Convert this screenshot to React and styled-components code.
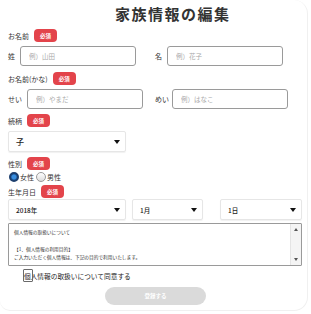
import React from "react";
import styled, { createGlobalStyle } from "styled-components";

const Global = createGlobalStyle`
  html, body {
    margin: 0;
    padding: 0;
    background: #ffffff;
  }
  body {
    font-family: "Noto Sans CJK JP", "Noto Sans", sans-serif;
    color: #333333;
  }
`;

const Card = styled.div`
  box-sizing: border-box;
  width: 308px;
  height: 311px;
  background: #ffffff;
  border: 1px solid #f0f0f0;
  border-top: none;
  border-left: none;
  border-radius: 0 14px 14px 10px;
  padding: 0 0 0 8px;
  display: flex;
  flex-direction: column;
`;

const Title = styled.h1`
  margin: 5px 0 0;
  padding-left: 107px;
  height: 20px;
  font-size: 15px;
  line-height: 18px;
  font-weight: 700;
  letter-spacing: 1.5px;
  color: #333333;
`;

const LabelRow = styled.div`
  display: flex;
  align-items: center;
  height: 13px;
  margin-top: ${(p) => p.$top || 0}px;
  font-size: 7px;
  color: #333333;
`;

const Badge = styled.span`
  display: inline-flex;
  align-items: center;
  justify-content: center;
  width: 23px;
  height: 13px;
  margin-left: 5px;
  border-radius: 4px;
  background: #e3444b;
  color: #ffffff;
  font-size: 5.5px;
  font-weight: 700;
`;

const FieldRow = styled.div`
  display: grid;
  grid-template-columns: 147px auto;
  margin-top: ${(p) => p.$top || 0}px;
`;

const Field = styled.label`
  display: flex;
  align-items: center;
  font-size: 7px;
  color: #333333;
`;

const FieldName = styled.span`
  margin-right: ${(p) => p.$gap || 5}px;
`;

const TextInput = styled.input`
  box-sizing: border-box;
  width: 116px;
  height: 20px;
  border: 1px solid #9a9a9a;
  border-radius: 3px;
  padding: 0 0 0 8px;
  font-family: inherit;
  font-size: 6.5px;
  outline: none;
  &::placeholder {
    color: #a8a8a8;
  }
`;

const Select = styled.div`
  box-sizing: border-box;
  display: flex;
  align-items: center;
  justify-content: space-between;
  width: ${(p) => p.$w}px;
  height: 21px;
  margin-left: ${(p) => p.$ml || 0}px;
  padding: 0 5px 0 7px;
  border: 1px solid #e6e6e6;
  border-radius: 2px;
  box-shadow: 0 1px 1px rgba(0, 0, 0, 0.06);
  font-size: ${(p) => p.$fs || 6.5}px;
  font-weight: 500;
  color: #222222;
`;

const Caret = styled.span`
  width: 0;
  height: 0;
  border-left: 3.5px solid transparent;
  border-right: 3.5px solid transparent;
  border-top: 4px solid #111111;
`;

const SelectRow = styled.div`
  display: flex;
  margin-top: ${(p) => p.$top || 0}px;
`;

const RadioRow = styled.div`
  display: flex;
  align-items: center;
  height: 12px;
  margin-top: 1px;
  font-size: 7px;
  color: #333333;
`;

const Radio = styled.span`
  box-sizing: border-box;
  width: 10px;
  height: 10px;
  margin-left: ${(p) => p.$ml || 0}px;
  margin-right: 1px;
  border-radius: 50%;
  border: ${(p) => (p.$on ? "2px solid #1d3f6e" : "1px solid #9a9a9a")};
  background: ${(p) =>
    p.$on
      ? "radial-gradient(circle, #3a8ede 0 45%, #1f5fa6 70%)"
      : "linear-gradient(#ffffff, #dcdcdc)"};
`;

const Policy = styled.div`
  box-sizing: border-box;
  display: flex;
  width: 294px;
  height: 43px;
  margin-top: 3px;
  border: 1px solid #9a9a9a;
  border-radius: 1px;
`;

const PolicyText = styled.div`
  flex: 1;
  padding: 4px 0 0 5px;
  font-size: 4.7px;
  line-height: 8.4px;
  color: #333333;
  white-space: pre;
  overflow: hidden;
`;

const Scrollbar = styled.div`
  width: 10px;
  display: flex;
  flex-direction: column;
  align-items: center;
  justify-content: space-between;
  padding: 4px 0;
  background: #f4f4f4;
  border-left: 1px solid #e4e4e4;
`;

const Arrow = styled.span`
  width: 0;
  height: 0;
  border-left: 2.5px solid transparent;
  border-right: 2.5px solid transparent;
  ${(p) =>
    p.$up
      ? "border-bottom: 3px solid #555555;"
      : "border-top: 3px solid #555555;"}
`;

const AgreeRow = styled.label`
  position: relative;
  display: flex;
  align-items: center;
  height: 13px;
  margin: 3px 0 0 16px;
  font-size: 6.7px;
  color: #222222;
`;

const CheckBox = styled.span`
  position: absolute;
  left: -1px;
  top: 0;
  box-sizing: border-box;
  width: 10px;
  height: 13px;
  border: 1px solid #6a6a6a;
  border-radius: 1px;
`;

const Submit = styled.button`
  align-self: flex-start;
  width: 101px;
  height: 18px;
  margin: 5px 0 0 97px;
  border: none;
  border-radius: 9px;
  background: #dadada;
  color: #ffffff;
  font-family: inherit;
  font-size: 5.5px;
  font-weight: 700;
`;

export default function App() {
  return (
    <>
      <Global />
      <Card>
        <Title>家族情報の編集</Title>
        <LabelRow $top={4}>
          お名前<Badge>必須</Badge>
        </LabelRow>
        <FieldRow $top={4}>
          <Field>
            <FieldName>姓</FieldName>
            <TextInput placeholder="例）山田" />
          </Field>
          <Field>
            <FieldName>名</FieldName>
            <TextInput placeholder="例）花子" />
          </Field>
        </FieldRow>
        <LabelRow $top={6}>
          お名前(かな)<Badge>必須</Badge>
        </LabelRow>
        <FieldRow $top={4}>
          <Field>
            <FieldName>せい</FieldName>
            <TextInput placeholder="例）やまだ" />
          </Field>
          <Field>
            <FieldName $gap={3}>めい</FieldName>
            <TextInput placeholder="例）はなこ" />
          </Field>
        </FieldRow>
        <LabelRow $top={5}>
          続柄<Badge>必須</Badge>
        </LabelRow>
        <SelectRow $top={4}>
          <Select $w={118} $fs={8}>
            子<Caret />
          </Select>
        </SelectRow>
        <LabelRow $top={5}>
          性別<Badge>必須</Badge>
        </LabelRow>
        <RadioRow>
          <Radio $on $ml={1} />
          女性
          <Radio $ml={2} />
          男性
        </RadioRow>
        <LabelRow $top={2}>
          生年月日<Badge>必須</Badge>
        </LabelRow>
        <SelectRow $top={1}>
          <Select $w={118}>
            2018年<Caret />
          </Select>
          <Select $w={71} $ml={6}>
            1月<Caret />
          </Select>
          <Select $w={82} $ml={17}>
            1日<Caret />
          </Select>
        </SelectRow>
        <Policy>
          <PolicyText>
            {"個人情報の取扱いについて\n\n【1．個人情報の利用目的】\nご入力いただく個人情報は、下記の目的で利用いたします。"}
          </PolicyText>
          <Scrollbar>
            <Arrow $up />
            <Arrow />
          </Scrollbar>
        </Policy>
        <AgreeRow>
          <CheckBox />
          個人情報の取扱いについて同意する
        </AgreeRow>
        <Submit>登録する</Submit>
      </Card>
    </>
  );
}
